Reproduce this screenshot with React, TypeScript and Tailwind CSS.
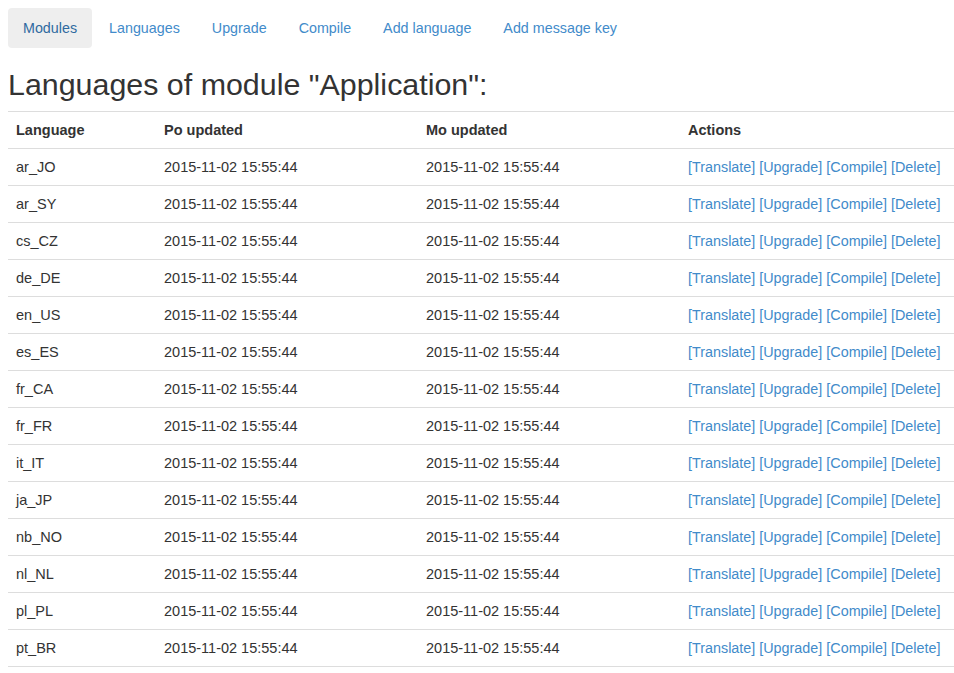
const NAV = ["Modules", "Languages", "Upgrade", "Compile", "Add language", "Add message key"];

const LANGS = [
  "ar_JO", "ar_SY", "cs_CZ", "de_DE", "en_US", "es_ES", "fr_CA",
  "fr_FR", "it_IT", "ja_JP", "nb_NO", "nl_NL", "pl_PL", "pt_BR",
];

const ACTIONS = ["Translate", "Upgrade", "Compile", "Delete"];

const STAMP = "2015-11-02 15:55:44";

export default function App() {
  return (
    <div className="pl-2 pt-2 text-[14px] leading-[20px] text-[#333] font-['Liberation_Sans',Arial,sans-serif] bg-white min-h-screen">
      <ul className="flex text-[14.3px]">
        {NAV.map((label, i) => (
          <li key={label} className={i > 0 ? "ml-[2px]" : ""}>
            <a
              href="#"
              className={`block px-[15px] py-[10px] rounded-[4px] ${
                i === 0 ? "bg-[#eee] text-[#2f6aa0]" : "text-[#428bca]"
              }`}
            >
              {label}
            </a>
          </li>
        ))}
      </ul>

      <h1 className="mt-5 mb-[10px] text-[30.4px] leading-[1.1] font-normal">
        Languages of module "Application":
      </h1>

      <table className="w-[946px] border-collapse table-fixed text-[14.5px]">
        <colgroup>
          <col className="w-[148px]" />
          <col className="w-[262px]" />
          <col className="w-[262px]" />
          <col className="w-[274px]" />
        </colgroup>
        <thead>
          <tr className="border-t border-[#ddd]">
            <th className="p-2 text-left font-bold">Language</th>
            <th className="p-2 text-left font-bold">Po updated</th>
            <th className="p-2 text-left font-bold">Mo updated</th>
            <th className="p-2 text-left font-bold">Actions</th>
          </tr>
        </thead>
        <tbody>
          {LANGS.map((lang) => (
            <tr key={lang} className="border-t border-b border-[#ddd]">
              <td className="p-2">{lang}</td>
              <td className="p-2">{STAMP}</td>
              <td className="p-2">{STAMP}</td>
              <td className="p-2 whitespace-nowrap text-[14.35px]">
                {ACTIONS.map((a, i) => (
                  <span key={a}>
                    {i > 0 && " "}
                    <a href="#" className="text-[#428bca]">[{a}]</a>
                  </span>
                ))}
              </td>
            </tr>
          ))}
        </tbody>
      </table>
    </div>
  );
}
